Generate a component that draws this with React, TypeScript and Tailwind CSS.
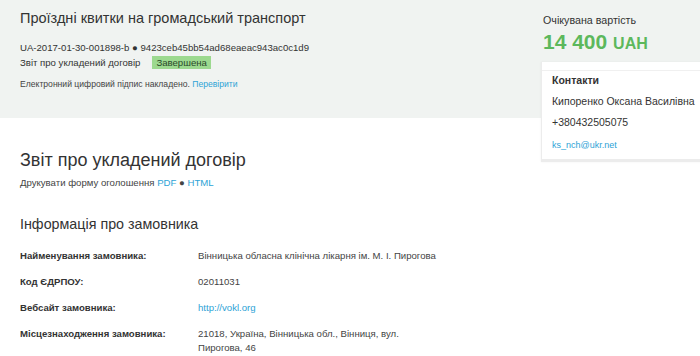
export default function App() {
  const rows: [string, React.ReactNode][] = [
    ['Найменування замовника:', 'Вінницька обласна клінічна лікарня ім. М. І. Пирогова'],
    ['Код ЄДРПОУ:', '02011031'],
    ['Вебсайт замовника:', <a className="text-[#2ea3d6]">http://vokl.org</a>],
    ['Місцезнаходження замовника:', <span>21018, Україна, Вінницька обл., Вінниця, вул.<br />Пирогова, 46</span>],
  ]

  return (
    <div className="relative w-[700px] h-[356px] overflow-hidden bg-white text-[#333] font-['Liberation_Sans',Arial,sans-serif]">
      {/* Header band */}
      <div className="h-[118px] bg-[#f0f3f1] flex">
        <div className="flex-1 pl-5 pt-[8px]">
          <h1 className="text-[14.5px] leading-[20px] text-[#333]">Проїздні квитки на громадський транспорт</h1>
          <div className="mt-[12px] text-[9.6px] leading-[15px]">UA-2017-01-30-001898-b ● 9423ceb45bb54ad68eaeac943ac0c1d9</div>
          <div className="flex items-center text-[9.6px] leading-[15px]">
            <span>Звіт про укладений договір</span>
            <span className="ml-[12px] bg-[#9cd98f] px-[4px] leading-[13px] text-[#2b4a2b]">Завершена</span>
          </div>
          <div className="mt-[8px] text-[8.6px] leading-[12px] text-[#444]">
            Електронний цифровий підпис накладено. <a className="text-[#2ea3d6]">Перевірити</a>
          </div>
        </div>
        <div className="w-[159px] pt-[13px] pl-[2px]">
          <div className="text-[10.7px] leading-[14px]">Очікувана вартість</div>
          <div className="mt-[3px] text-[#5cb85c] font-bold text-[21px] leading-[24px]">
            14 400 <span className="text-[16px]">UAH</span>
          </div>
        </div>
      </div>

      {/* Contacts card */}
      <div className="absolute left-[541px] top-[62px] w-[180px] bg-white border-b-[3px] border-l border-[#ececec] shadow-[0_0_2px_rgba(0,0,0,0.06)]">
        <div className="h-[9px] border-b border-[#f0f0f0]" />
        <div className="px-[10px] pt-[1px] pb-[7px]">
          <div className="text-[10.5px] font-bold leading-[16px]">Контакти</div>
          <div className="mt-[5px] text-[10.5px] leading-[16px]">Кипоренко Оксана Василівна</div>
          <div className="mt-[5px] text-[10.5px] leading-[16px]">+380432505075</div>
          <div className="mt-[8px] text-[9px] leading-[14px] text-[#2ea3d6]">ks_nch@ukr.net</div>
        </div>
      </div>

      {/* Body */}
      <div className="pl-5 pt-[30px]">
        <h2 className="text-[18px] leading-[24px]">Звіт про укладений договір</h2>
        <div className="mt-[4px] text-[9.6px] leading-[13px] text-[#444]">
          Друкувати форму оголошення <a className="text-[#2ea3d6]">PDF</a> ● <a className="text-[#2ea3d6]">HTML</a>
        </div>
        <h3 className="mt-[25px] text-[14.3px] leading-[20px]">Інформація про замовника</h3>
        <div className="mt-[15px] flex flex-col gap-[12px]">
          {rows.map(([k, v], i) => (
            <div key={i} className="flex text-[9.6px] leading-[14px]">
              <div className="w-[178px] font-bold text-[#333]">{k}</div>
              <div className="flex-1 text-[#444]">{v}</div>
            </div>
          ))}
        </div>
      </div>
    </div>
  )
}
